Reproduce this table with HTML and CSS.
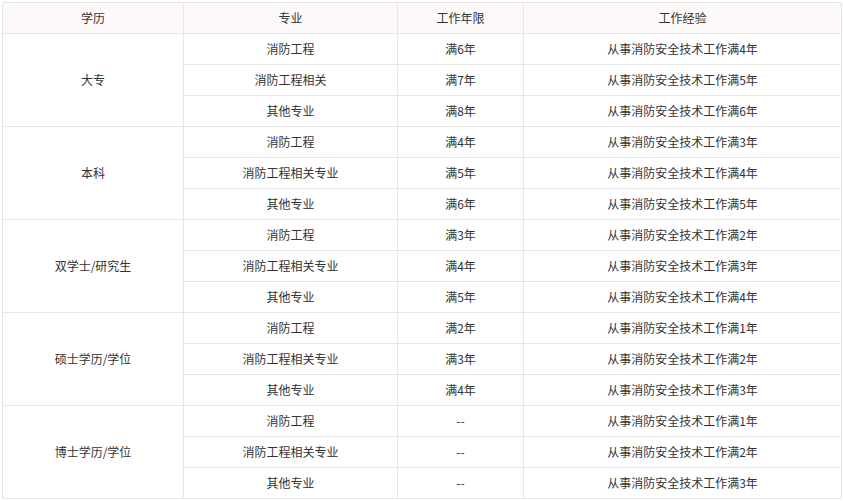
FILE: index.html
```html
<!DOCTYPE html>
<html lang="zh">
<head>
<meta charset="utf-8">
<link rel="stylesheet" href="styles.css">
</head>
<body>
<table class="req">
  <colgroup>
    <col class="c1"><col class="c2"><col class="c3"><col class="c4">
  </colgroup>
  <thead>
    <tr><th>学历</th><th>专业</th><th>工作年限</th><th>工作经验</th></tr>
  </thead>
  <tbody>
    <tr><td rowspan="3">大专</td><td>消防工程</td><td>满6年</td><td>从事消防安全技术工作满4年</td></tr>
    <tr><td>消防工程相关</td><td>满7年</td><td>从事消防安全技术工作满5年</td></tr>
    <tr><td>其他专业</td><td>满8年</td><td>从事消防安全技术工作满6年</td></tr>
    <tr><td rowspan="3">本科</td><td>消防工程</td><td>满4年</td><td>从事消防安全技术工作满3年</td></tr>
    <tr><td>消防工程相关专业</td><td>满5年</td><td>从事消防安全技术工作满4年</td></tr>
    <tr><td>其他专业</td><td>满6年</td><td>从事消防安全技术工作满5年</td></tr>
    <tr><td rowspan="3">双学士/研究生</td><td>消防工程</td><td>满3年</td><td>从事消防安全技术工作满2年</td></tr>
    <tr><td>消防工程相关专业</td><td>满4年</td><td>从事消防安全技术工作满3年</td></tr>
    <tr><td>其他专业</td><td>满5年</td><td>从事消防安全技术工作满4年</td></tr>
    <tr><td rowspan="3">硕士学历/学位</td><td>消防工程</td><td>满2年</td><td>从事消防安全技术工作满1年</td></tr>
    <tr><td>消防工程相关专业</td><td>满3年</td><td>从事消防安全技术工作满2年</td></tr>
    <tr><td>其他专业</td><td>满4年</td><td>从事消防安全技术工作满3年</td></tr>
    <tr><td rowspan="3">博士学历/学位</td><td>消防工程</td><td>--</td><td>从事消防安全技术工作满1年</td></tr>
    <tr><td>消防工程相关专业</td><td>--</td><td>从事消防安全技术工作满2年</td></tr>
    <tr><td>其他专业</td><td>--</td><td>从事消防安全技术工作满3年</td></tr>
  </tbody>
</table>
</body>
</html>
```
FILE: styles.css
```css
html, body {
  margin: 0;
  padding: 0;
  background: #fff;
}
body {
  padding: 2px 0 0 2px;
  font-family: "Noto Sans CJK SC", "Noto Sans", sans-serif;
  font-size: 12px;
  color: #333;
}
.req {
  border-collapse: collapse;
  table-layout: fixed;
  width: 839px;
}
.req .c1 { width: 181px; }
.req .c2 { width: 214px; }
.req .c3 { width: 126px; }
.req .c4 { width: 318px; }
.req th, .req td {
  border: 1px solid #e6e6e6;
  padding: 0;
  text-align: center;
  vertical-align: middle;
  font-weight: normal;
  line-height: 16px;
  box-sizing: border-box;
}
.req thead th {
  background: #fdf9f8;
  height: 31px;
}
.req tbody td {
  height: 31px;
}
```
